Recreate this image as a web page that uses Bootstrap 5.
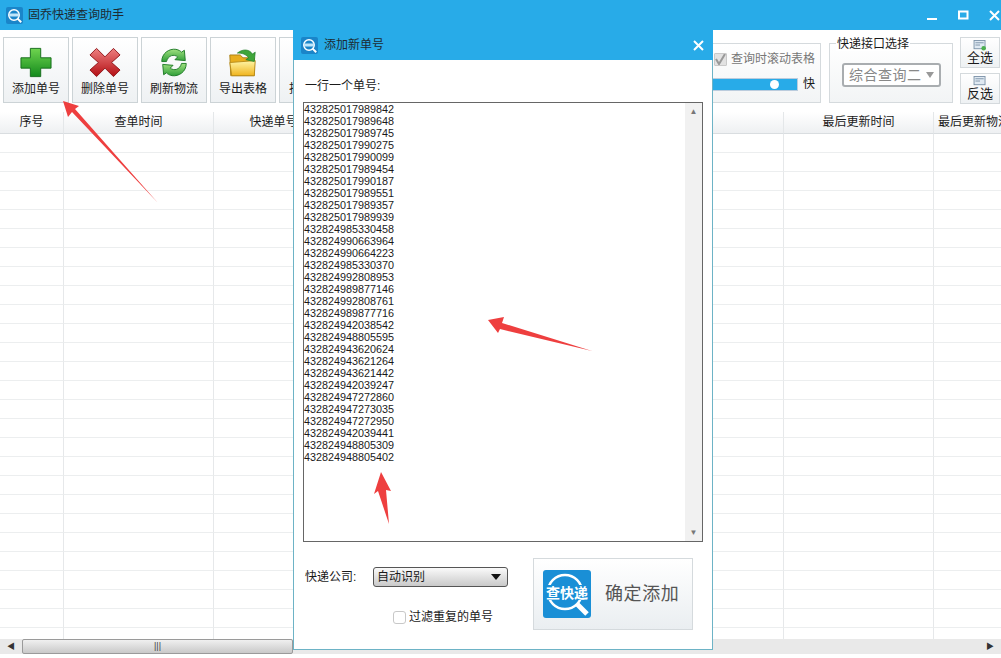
<!DOCTYPE html>
<html lang="zh-CN">
<head>
    <meta charset="UTF-8">
    <meta name="viewport" content="width=device-width, initial-scale=1.0">
    <title>固乔快递查询助手</title>
    <link href="https://cdn.jsdelivr.net/npm/bootstrap@5.3.3/dist/css/bootstrap.min.css" rel="stylesheet">
    <style>
        html, body {
            height: 658px;
            overflow: hidden;
        }
        body {
            position: relative;
            width: 1001px;
            background: #fff;
            color: #1a1a1a;
            font: 12px/1.2 "Liberation Sans", "Noto Sans CJK SC", sans-serif;
        }
        .title-strip {
            height: 30px;
            background: #28abe8;
            color: #1d2b33;
            padding: 0 1px 0 6px;
        }
        .title-text {
            margin-left: 5px;
        }
        .win-btns {
            gap: 20px;
        }
        .tool-strip {
            height: 82px;
            padding: 7px 1px 0 3px;
            gap: 3px;
        }
        .tool-btn {
            width: 66px;
            height: 66px;
            padding: 3px 0 0;
            border: 1px solid #ccd3d6;
            border-radius: 0;
            background: linear-gradient(#fff, #eef1f3);
            font-size: 12px;
            line-height: 14px;
            color: #1a1a1a;
            white-space: nowrap;
            overflow: hidden;
        }
        .tool-btn svg {
            display: block;
            width: 32px;
            height: 31px;
            margin: 0 auto 4px;
        }
        .tool-btn-cut {
            padding-left: 9px;
            text-align: left;
        }
        .group-box {
            position: relative;
            margin-top: 6px;
            height: 60px;
            border: 1px solid #d5dadd;
            background: linear-gradient(#fff, #f2f4f5);
        }
        .speed-box {
            width: 191px;
            padding: 8px 5px 0 8px;
            color: #777;
        }
        .speed-check.form-check-input:checked[type=checkbox] {
            margin: 0 !important;
            width: 13px;
            height: 13px;
            border: 1px solid #c9c9c9;
            border-radius: 1px;
            background-color: #e2e2e2;
            background-image: url("data:image/svg+xml,%3csvg xmlns='http://www.w3.org/2000/svg' viewBox='0 0 13 13'%3e%3cpath d='M2 6l3 5 6-10' fill='none' stroke='%23999' stroke-width='2'/%3e%3c/svg%3e");
            background-size: 13px 13px;
        }
        .speed-row {
            margin-top: 11px;
            color: #1a1a1a;
        }
        .speed-track {
            position: relative;
            flex: 1;
            height: 13px;
            margin-right: 5px;
            border: 1px solid #bcd;
            border-radius: 0;
            background: #fff;
        }
        .speed-track .progress-bar {
            background: #28abe8;
        }
        .speed-knob {
            position: absolute;
            right: 18px;
            top: 1px;
            width: 9px;
            height: 9px;
            border-radius: 50%;
            background: #fff;
        }
        .api-box {
            width: 124px;
            margin-left: 5px;
            padding: 19px 11px 0 12px;
        }
        .api-legend {
            position: absolute;
            left: 6px;
            top: -7px;
            padding: 0 1px;
            background: #fff;
            line-height: 14px;
            color: #1a1a1a;
        }
        .api-select {
            height: 24px;
            border: 2px solid #a9adb0;
            border-radius: 3px;
            padding: 0 5px;
            background: #fff;
            color: #888;
            font-size: 14px;
            letter-spacing: .5px;
        }
        .api-arrow {
            width: 0;
            height: 0;
            border: 4px solid transparent;
            border-top: 6px solid #999;
            border-bottom: 0;
        }
        .small-col {
            margin-left: 4px;
            gap: 5px;
        }
        .small-btn {
            width: 40px;
            height: 31px;
            padding: 0;
            border: 1px solid #d5dadd;
            border-radius: 0;
            background: linear-gradient(#fff, #eef1f3);
            font-size: 13px;
            line-height: 14px;
            color: #1a1a1a;
        }
        .small-btn svg {
            display: block;
            margin: 0 auto;
        }
        .grid-wrap {
            height: 527px;
            overflow: hidden;
        }
        .order-grid {
            table-layout: fixed;
            width: 1081px;
            margin: 0;
            border-collapse: separate;
            border-spacing: 0;
        }
        .order-grid th {
            height: 22px;
            padding: 0;
            vertical-align: middle;
            border-bottom: 1px solid #d9dde0;
            border-right: 1px solid #e4e7e9;
            background: linear-gradient(#fff, #eef0f2);
            font-weight: 400;
            font-size: 12px;
            text-align: center;
            color: #1a1a1a;
            white-space: nowrap;
            overflow: hidden;
        }
        .order-grid td {
            height: 19px;
            padding: 0;
            border-bottom: 1px solid #eceeef;
            border-right: 1px solid #e6e8ea;
        }
        .h-scroll {
            height: 15px;
            background: #e9e9e9;
        }
        .h-scroll-btn {
            width: 22px;
            font-size: 8px;
            line-height: 15px;
            text-align: center;
            color: #333;
        }
        .h-scroll-thumb {
            width: 271px;
            border: 1px solid #9a9a9a;
            border-radius: 2px;
            background: linear-gradient(#f0f0f0, #c9c9c9);
            font-size: 9px;
            line-height: 12px;
            text-align: center;
            color: #444;
        }
        .add-dialog {
            position: absolute;
            left: 293px;
            top: 30px;
            width: 420px;
            height: 620px;
            border: 1px solid #6db3c6;
            border-top: 0;
            background: #fff;
        }
        .add-head {
            height: 30px;
            margin: 0 -1px;
            padding: 0 9px 0 8px;
            background: #28abe8;
            color: #1d2b33;
        }
        .add-head-text {
            margin-left: 6px;
        }
        .add-body {
            padding: 19px 9px 0;
        }
        .no-label {
            padding-left: 2px;
        }
        .no-box {
            height: 440px;
            margin-top: 9px;
            border: 1px solid #666;
        }
        .no-list {
            font: 10.8px/12px "Liberation Sans", sans-serif;
            color: #1a1a1a;
        }
        .v-scroll {
            width: 17px;
            background: #f1f1f1;
            font-size: 8px;
            text-align: center;
            color: #777;
        }
        .add-foot {
            margin-top: 16px;
            padding-left: 2px;
        }
        .company-row {
            margin-top: 9px;
        }
        .company-label {
            width: 68px;
        }
        .company-select {
            width: 135px;
            height: 20px;
            padding: 0 0 0 3px;
            border: 1px solid #555;
            border-radius: 3px;
            background: url("data:image/svg+xml,%3csvg xmlns='http://www.w3.org/2000/svg' width='10' height='6'%3e%3cpath d='M0 0h10L5 6z' fill='%23111'/%3e%3c/svg%3e") no-repeat right 6px center, linear-gradient(#fafafa, #c9c9c9);
            font-size: 12px;
            line-height: 18px;
            color: #1a1a1a;
        }
        .dedupe-row {
            margin: 23px 0 0 88px;
        }
        .dedupe-check {
            width: 13px;
            height: 13px;
            margin: 0 3px 0 0 !important;
            border: 1px solid #c8c8c8;
            border-radius: 1px;
        }
        .confirm-btn {
            width: 160px;
            height: 72px;
            margin-left: 25px;
            padding: 0 0 0 9px;
            border: 1px solid #d5dadd;
            border-radius: 0;
            background: linear-gradient(#fff, #eaeef1);
            color: #555;
            font-size: 18px;
            letter-spacing: .6px;
        }
        .confirm-logo {
            position: relative;
            width: 48px;
            height: 48px;
            margin-right: 14px;
            border-radius: 3px;
            background: #1a8fd6;
        }
        .confirm-logo span {
            position: absolute;
            left: 0;
            right: 0;
            top: 15px;
            font-size: 14px;
            font-weight: 700;
            line-height: 16px;
            letter-spacing: 0;
            text-align: center;
            white-space: nowrap;
            color: #fff;
        }
        .pointer-layer {
            position: absolute;
            left: 0;
            top: 0;
            pointer-events: none;
        }
    </style>
</head>
<body>
    <div class="title-strip d-flex align-items-center">
        <svg width="17" height="17" viewBox="0 0 17 17"><rect width="17" height="17" rx="2" fill="#1a85c9"/><circle cx="8" cy="8" r="5.2" fill="none" stroke="#fff" stroke-width="1.5"/><path d="M11.6 11.6l3.6 3.6" stroke="#fff" stroke-width="2"/><rect x="3" y="6.5" width="10" height="3" fill="#bfe6fa"/></svg>
        <span class="title-text">固乔快递查询助手</span>
        <div class="win-btns d-flex align-items-center ms-auto">
            <svg width="11" height="11" viewBox="0 0 11 11"><path d="M0 9h10" stroke="#fff" stroke-width="2"/></svg>
            <svg width="11" height="11" viewBox="0 0 11 11"><rect x="1" y="1.5" width="8.5" height="7" fill="none" stroke="#fff" stroke-width="2"/></svg>
            <svg width="11" height="11" viewBox="0 0 11 11"><path d="M1 1l9 9M10 1l-9 9" stroke="#fff" stroke-width="2"/></svg>
        </div>
    </div>

    <div class="tool-strip d-flex">
        <button class="btn tool-btn">
            <svg viewBox="0 0 34 32"><defs><linearGradient id="gr" x1="0" y1="0" x2="0" y2="1"><stop offset="0" stop-color="#6fd44f"/><stop offset="1" stop-color="#138a1c"/></linearGradient></defs><path d="M11 1h11v10h11v11H22v9H11v-9H1V11h10z" fill="url(#gr)" stroke="#136b1a"/></svg>
            添加单号
        </button>
        <button class="btn tool-btn">
            <svg viewBox="0 0 34 32"><defs><linearGradient id="rd" x1="0" y1="0" x2="0" y2="1"><stop offset="0" stop-color="#ee7f7f"/><stop offset="1" stop-color="#b30f14"/></linearGradient></defs><path d="M8 1l9 9 9-9 7 7-9 8 9 8-7 7-9-9-9 9-7-7 9-8-9-8z" fill="url(#rd)" stroke="#8f1418"/></svg>
            删除单号
        </button>
        <button class="btn tool-btn">
            <svg viewBox="0 0 34 32"><defs><linearGradient id="rf" x1="0" y1="0" x2="0" y2="1"><stop offset="0" stop-color="#9fe07f"/><stop offset="1" stop-color="#2f9e38"/></linearGradient></defs><path d="M4 15C4 6 12 1 19 2c3 .5 5 2 6 3l3-2 1 11-11-1 3-3c-4-3-10-2-12 5z" fill="url(#rf)" stroke="#1d7a25"/><path d="M30 17c0 9-8 14-15 13-3-.5-5-2-6-3l-3 2-1-11 11 1-3 3c4 3 10 2 12-5z" fill="url(#rf)" stroke="#1d7a25"/></svg>
            刷新物流
        </button>
        <button class="btn tool-btn">
            <svg viewBox="0 0 34 32"><defs><linearGradient id="yl" x1="0" y1="0" x2="0" y2="1"><stop offset="0" stop-color="#fff6a8"/><stop offset="1" stop-color="#f0b41e"/></linearGradient></defs><path d="M3 8h11l3 3h12v19H4z" fill="#e8ae1e" stroke="#a97f16"/><path d="M3 16l27-2-1 16H5z" fill="url(#yl)" stroke="#b98c1a"/><path d="M11 6c6-5 13-4 16 1l3-2-1 10-9-2 3-2c-3-4-7-5-12-5z" fill="#3fa53a" stroke="#1d7a25" stroke-width=".7"/></svg>
            导出表格
        </button>
        <button class="btn tool-btn tool-btn-cut">
            <svg viewBox="0 0 34 32"></svg>
            批
        </button>

        <div class="group-box speed-box ms-auto">
            <div class="d-flex align-items-center justify-content-end">
                <input class="form-check-input speed-check" type="checkbox" checked>
                <span class="ms-1">查询时滚动表格</span>
            </div>
            <div class="speed-row d-flex align-items-center">
                <div class="progress speed-track">
                    <div class="progress-bar" style="width: 100%"></div>
                    <span class="speed-knob"></span>
                </div>
                <span>快</span>
            </div>
        </div>

        <div class="group-box api-box">
            <span class="api-legend">快递接口选择</span>
            <div class="api-select d-flex align-items-center justify-content-between">
                <span>综合查询二</span>
                <span class="api-arrow"></span>
            </div>
        </div>

        <div class="small-col d-flex flex-column">
            <button class="btn small-btn">
                <svg width="14" height="11" viewBox="0 0 14 12"><rect x=".5" y=".5" width="12" height="9" fill="#dfe9f2" stroke="#7d93a8"/><path d="M2 3h9M2 5.5h5" stroke="#7d93a8"/><circle cx="11" cy="9" r="2.5" fill="#4caf50"/></svg>
                全选
            </button>
            <button class="btn small-btn">
                <svg width="14" height="11" viewBox="0 0 14 12"><rect x=".5" y=".5" width="12" height="9" fill="#dfe9f2" stroke="#7d93a8"/><path d="M2 3h9M2 5.5h5" stroke="#7d93a8"/></svg>
                反选
            </button>
        </div>
    </div>

    <div class="grid-wrap">
        <table class="table order-grid">
            <colgroup>
                <col style="width: 64px">
                <col style="width: 150px">
                <col style="width: 120px">
                <col style="width: 300px">
                <col style="width: 150px">
                <col style="width: 150px">
                <col style="width: 147px">
            </colgroup>
            <thead>
                <tr>
                    <th>序号</th>
                    <th>查单时间</th>
                    <th>快递单号</th>
                    <th></th>
                    <th></th>
                    <th>最后更新时间</th>
                    <th class="text-start ps-1">最后更新物流</th>
                </tr>
            </thead>
            <tbody id="grid-rows"></tbody>
        </table>
    </div>

    <div class="h-scroll d-flex">
        <div class="h-scroll-btn">◀</div>
        <div class="h-scroll-thumb">|||</div>
        <div class="h-scroll-btn ms-auto">▶</div>
    </div>

    <div class="add-dialog">
        <div class="add-head d-flex align-items-center">
            <svg width="17" height="17" viewBox="0 0 17 17"><rect width="17" height="17" rx="2" fill="#1a85c9"/><circle cx="8" cy="8" r="5.2" fill="none" stroke="#fff" stroke-width="1.5"/><path d="M11.6 11.6l3.6 3.6" stroke="#fff" stroke-width="2"/><rect x="3" y="6.5" width="10" height="3" fill="#bfe6fa"/></svg>
            <span class="add-head-text">添加新单号</span>
            <svg class="ms-auto" width="11" height="11" viewBox="0 0 11 11"><path d="M1 1l9 9M10 1l-9 9" stroke="#fff" stroke-width="2"/></svg>
        </div>
        <div class="add-body">
            <div class="no-label">一行一个单号:</div>
            <div class="no-box d-flex">
                <div id="no-list" class="no-list flex-grow-1"></div>
                <div class="v-scroll d-flex flex-column justify-content-between py-1">
                    <span>▲</span>
                    <span>▼</span>
                </div>
            </div>
            <div class="add-foot d-flex">
                <div>
                    <div class="company-row d-flex align-items-center">
                        <span class="company-label">快递公司:</span>
                        <div class="company-select">自动识别</div>
                    </div>
                    <div class="dedupe-row d-flex align-items-center">
                        <input class="form-check-input dedupe-check" type="checkbox">
                        <span>过滤重复的单号</span>
                    </div>
                </div>
                <button class="btn confirm-btn d-flex align-items-center">
                    <span class="confirm-logo flex-shrink-0">
                        <svg width="48" height="48" viewBox="0 0 48 48"><circle cx="22" cy="22" r="17" fill="none" stroke="#fff" stroke-width="2.5"/><rect x="0" y="15" width="48" height="15" fill="#1a8fd6"/><path d="M34 34l10 10" stroke="#fff" stroke-width="5"/></svg>
                        <span>查快递</span>
                    </span>
                    确定添加
                </button>
            </div>
        </div>
    </div>

    <svg class="pointer-layer" width="1001" height="658" viewBox="0 0 1001 658">
        <polygon points="63,101 79,106 75,109 158,203 72,112 68,117" fill="#ee3f3f"/>
        <polygon points="488,320 504,317 502,323 592,351 500,329 498,333" fill="#ee3f3f"/>
        <polygon points="381,472 391,491 386,490 389,524 378,491 374,494" fill="#ee3f3f"/>
    </svg>

    <script>
        const numbers = [
            '432825017989842', '432825017989648', '432825017989745', '432825017990275', '432825017990099',
            '432825017989454', '432825017990187', '432825017989551', '432825017989357', '432825017989939',
            '432824985330458', '432824990663964', '432824990664223', '432824985330370', '432824992808953',
            '432824989877146', '432824992808761', '432824989877716', '432824942038542', '432824948805595',
            '432824943620624', '432824943621264', '432824943621442', '432824942039247', '432824947272860',
            '432824947273035', '432824947272950', '432824942039441', '432824948805309', '432824948805402'
        ];

        document.getElementById('no-list').innerHTML = numbers.map(no => `<div>${no}</div>`).join('');

        // empty grid rows
        let rows = '';
        for (let i = 0; i < 27; i++) {
            rows += '<tr>' + '<td></td>'.repeat(7) + '</tr>';
        }
        document.getElementById('grid-rows').innerHTML = rows;
    </script>

    <script src="https://cdn.jsdelivr.net/npm/bootstrap@5.3.3/dist/js/bootstrap.bundle.min.js"></script>
</body>
</html>
